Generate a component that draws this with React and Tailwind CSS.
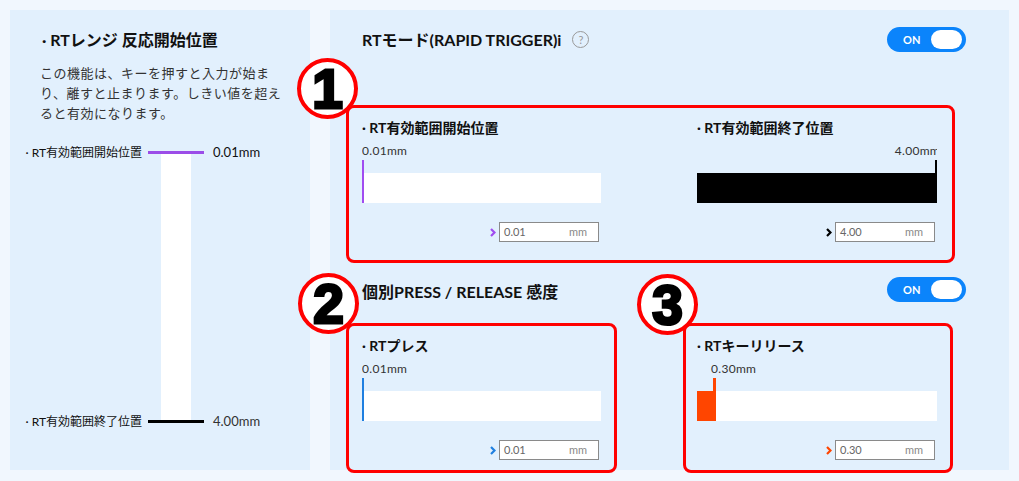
import React from 'react';

const Toggle = () => (
    <div className="w-[79px] h-[25px] rounded-full bg-[#0b84fb] flex items-center justify-between pl-[16px] pr-[4px]">
        <span className="text-white text-[11px] font-bold leading-none">ON</span>
        <span className="w-[31px] h-[19px] rounded-full bg-white"></span>
    </div>
);

const Chevron = ({ color }) => (
    <svg width="6" height="9" viewBox="0 0 6 9">
        <path d="M1 1 L4.5 4.5 L1 8" fill="none" stroke={color} strokeWidth="2.2" />
    </svg>
);

// numbered annotation circle
const Badge = ({ n, className }) => (
    <div className={`absolute w-[61px] h-[61px] rounded-full border-[4px] border-[#ff0000] bg-white flex items-center justify-center ${className}`}>
        <span className="font-['Liberation_Sans',sans-serif] font-bold text-[55px] leading-none text-black [-webkit-text-stroke:3px_black] mt-[2px]">{n}</span>
    </div>
);

const Slider = ({ label, value, input, color, fill = 0, markerLeft = 0, markerWidth = 2, valueClass = '', right = false }) => (
    <div className="w-full">
        <div className="text-[14px] leading-[16px] font-bold text-[#111]">· RT{label}</div>
        <div className={`mt-2 h-[14px] overflow-hidden flex ${right ? 'justify-end' : ''}`}>
            <span className={`text-[12px] leading-[14px] tracking-[0.3px] text-[#333] whitespace-nowrap ${valueClass}`}>{value}</span>
        </div>
        <div className="relative mt-[2px] h-[43px]">
            <div className="absolute left-0 right-0 top-[13px] h-[30px] bg-white"></div>
            {fill > 0 && (
                <div className="absolute left-0 top-[13px] h-[30px]" style={{ width: fill, background: color }}></div>
            )}
            <div
                className="absolute top-0 h-[43px]"
                style={right ? { right: 0, width: markerWidth, background: color } : { left: markerLeft, width: markerWidth, background: color }}
            ></div>
        </div>
        <div className="mt-[19px] flex justify-end items-center gap-[3px] pr-[2px]">
            <Chevron color={color} />
            <div className="w-[100px] h-[20px] border border-[#8a8a8a] bg-white flex items-center justify-between pl-[4px] pr-[11px] text-[11px]">
                <span className="text-[#666]">{input}</span>
                <span className="text-[#888]">mm</span>
            </div>
        </div>
    </div>
);

const App = () => {
    return (
        <div className="w-[1019px] h-[481px] bg-[#f1f7fe] p-[10px] flex gap-[20px] font-['Lato','Noto_Sans_CJK_JP',sans-serif] text-[#111]">
            {/* panneau gauche */}
            <div className="w-[300px] h-[460px] bg-[#e2f0fd] shrink-0">
                <h2 className="pt-[19px] pl-[32px] text-[16px] leading-[22px] font-bold">· RTレンジ 反応開始位置</h2>
                <p className="mt-[12px] pl-[30px] text-[13px] leading-[20px] tracking-[0.5px] text-[#333]">
                    この機能は、キーを押すと入力が始ま<br />り、離すと止まります。しきい値を超え<br />ると有効になります。
                </p>
                <div className="mt-[28px]">
                    <div className="flex items-center h-[3px]">
                        <span className="w-[132px] text-right text-[12px] leading-none whitespace-nowrap">· RT有効範囲開始位置</span>
                        <span className="ml-[6px] w-[56px] h-[3px] bg-[#9b4de8]"></span>
                        <span className="ml-[9px] text-[13px] leading-none">0.01mm</span>
                    </div>
                    <div className="ml-[151px] w-[30px] h-[266px] bg-white"></div>
                    <div className="flex items-center h-[3px]">
                        <span className="w-[132px] text-right text-[12px] leading-none whitespace-nowrap">· RT有効範囲終了位置</span>
                        <span className="ml-[6px] w-[56px] h-[3px] bg-black"></span>
                        <span className="ml-[9px] text-[13px] leading-none text-[#333]">4.00mm</span>
                    </div>
                </div>
            </div>

            {/* panneau droit */}
            <div className="relative flex-1 h-[460px] bg-[#e2f0fd]">
                <div className="mt-[17px] ml-[32px] w-[604px] h-[25px] flex items-center justify-between">
                    <div className="flex items-center">
                        <span className="text-[16px] font-bold leading-none">RTモード(RAPID TRIGGER)i</span>
                        <span className="ml-[11px] w-[17px] h-[17px] rounded-full border border-[#999] text-[#999] text-[11px] leading-none flex items-center justify-center">?</span>
                    </div>
                    <Toggle />
                </div>

                <div className="mt-[53px] ml-[16px] w-[609px] h-[158px] border-[3px] border-[#ff0000] rounded-[8px] pt-[12px] pl-[13px] flex gap-[96px]">
                    <div className="w-[239px]">
                        <Slider label="有効範囲開始位置" value="0.01mm" input="0.01" color="#a04cf0" />
                    </div>
                    <div className="w-[240px]">
                        <Slider label="有効範囲終了位置" value="4.00mm" input="4.00" color="#000" fill={240} right valueClass="mr-[-3px]" />
                    </div>
                </div>

                <div className="mt-[14px] ml-[32px] w-[604px] h-[25px] flex items-center justify-between">
                    <span className="text-[16px] font-bold leading-none mt-[4px]">個別PRESS / RELEASE 感度</span>
                    <Toggle />
                </div>

                <div className="mt-[21px] ml-[16px] flex gap-[66px]">
                    <div className="w-[271px] h-[150px] border-[3px] border-[#ff0000] rounded-[8px] pt-[12px] pl-[13px] pr-[13px]">
                        <Slider label="プレス" value="0.01mm" input="0.01" color="#1f7fe0" />
                    </div>
                    <div className="w-[270px] h-[150px] border-[3px] border-[#ff0000] rounded-[8px] pt-[12px] pl-[11px] pr-[13px]">
                        <Slider label="キーリリース" value="0.30mm" input="0.30" color="#ff4500" fill={19} markerLeft={16} markerWidth={3} valueClass="ml-[14px]" />
                    </div>
                </div>

                <Badge n="1" className="left-[-33px] top-[48px]" />
                <Badge n="2" className="left-[-32px] top-[263px]" />
                <Badge n="3" className="left-[307px] top-[264px]" />
            </div>
        </div>
    );
};

export default App;
